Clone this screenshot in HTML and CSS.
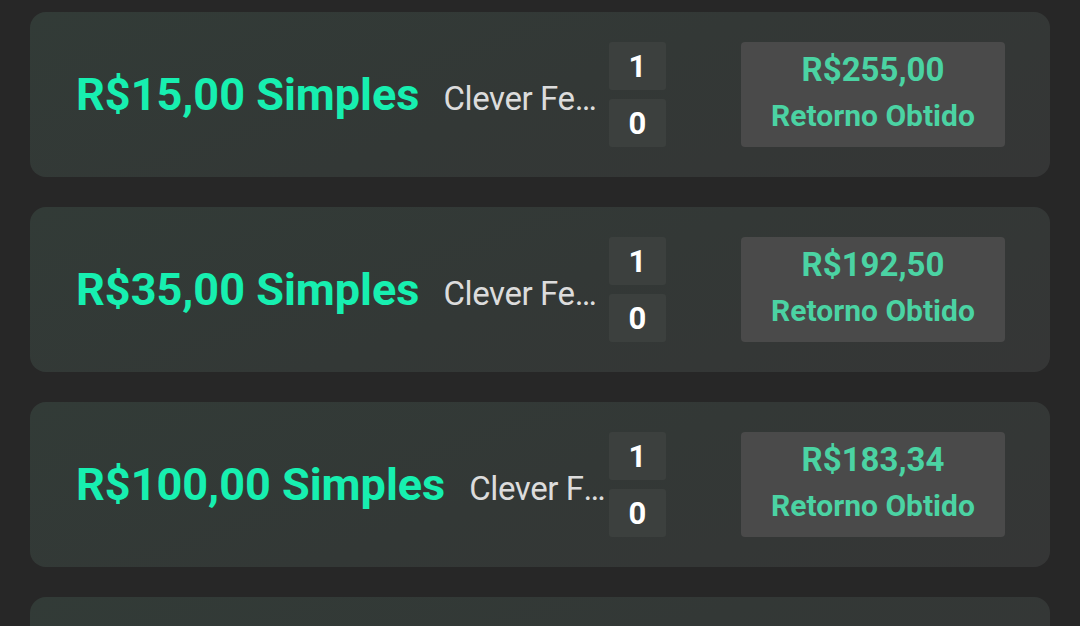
FILE: index.html
```html
<!DOCTYPE html>
<html lang="pt-BR">
<head>
<meta charset="utf-8">
<link rel="stylesheet" href="styles.css">
</head>
<body>
<div class="list">
  <div class="card">
    <div class="info">
      <span class="title">R$15,00 Simples</span>
      <span class="name">Clever Ferreira</span>
    </div>
    <div class="score">
      <div class="box">1</div>
      <div class="box">0</div>
    </div>
    <div class="ret">
      <div class="amount">R$255,00</div>
      <div class="label">Retorno Obtido</div>
    </div>
  </div>
  <div class="card">
    <div class="info">
      <span class="title">R$35,00 Simples</span>
      <span class="name">Clever Ferreira</span>
    </div>
    <div class="score">
      <div class="box">1</div>
      <div class="box">0</div>
    </div>
    <div class="ret">
      <div class="amount">R$192,50</div>
      <div class="label">Retorno Obtido</div>
    </div>
  </div>
  <div class="card">
    <div class="info">
      <span class="title">R$100,00 Simples</span>
      <span class="name">Clever Ferreira</span>
    </div>
    <div class="score">
      <div class="box">1</div>
      <div class="box">0</div>
    </div>
    <div class="ret">
      <div class="amount">R$183,34</div>
      <div class="label">Retorno Obtido</div>
    </div>
  </div>
  <div class="card">
    <div class="info">
      <span class="title">R$50,00 Simples</span>
      <span class="name">Clever Ferreira</span>
    </div>
    <div class="score">
      <div class="box">1</div>
      <div class="box">0</div>
    </div>
    <div class="ret">
      <div class="amount">R$120,00</div>
      <div class="label">Retorno Obtido</div>
    </div>
  </div>
</div>
</body>
</html>
```
FILE: styles.css
```css
html, body {
  margin: 0;
  padding: 0;
  background: #272727;
  height: 100%;
  overflow: hidden;
}
body {
  font-family: Roboto, "Noto Sans", sans-serif;
}
.list {
  display: flex;
  flex-direction: column;
  gap: 30px;
  padding: 12px 30px 0 30px;
}
.card {
  display: flex;
  align-items: center;
  height: 165px;
  box-sizing: border-box;
  padding: 0 45px 0 46px;
  border-radius: 16px;
  background: linear-gradient(160deg, #323b37 0%, #333836 50%, #353636 100%);
  flex-shrink: 0;
}
.info {
  flex: 1;
  min-width: 0;
  display: flex;
  align-items: baseline;
  gap: 24px;
  margin-right: 1px;
  white-space: nowrap;
}
.title {
  flex-shrink: 0;
  font-weight: 700;
  font-size: 45px;
  color: #17efb0;
}
.name {
  min-width: 0;
  max-width: 158px;
  overflow: hidden;
  text-overflow: ellipsis;
  font-size: 33px;
  letter-spacing: -0.4px;
  color: #dcdcdc;
}
.score {
  display: flex;
  flex-direction: column;
  gap: 9px;
  margin-left: auto;
  margin-right: 75px;
}
.box {
  width: 57px;
  height: 48px;
  border-radius: 3px;
  background: #3c403e;
  color: #ffffff;
  font-weight: 700;
  font-size: 31px;
  line-height: 1;
  display: flex;
  align-items: center;
  justify-content: center;
}
.ret {
  width: 264px;
  height: 105px;
  box-sizing: border-box;
  padding-bottom: 6px;
  border-radius: 4px;
  background: #4a4a4a;
  color: #4bd3a3;
  font-weight: 700;
  display: flex;
  flex-direction: column;
  align-items: center;
  justify-content: center;
  gap: 8px;
}
.amount {
  font-size: 33px;
  line-height: 40px;
}
.label {
  font-size: 30px;
  line-height: 36px;
}
```
